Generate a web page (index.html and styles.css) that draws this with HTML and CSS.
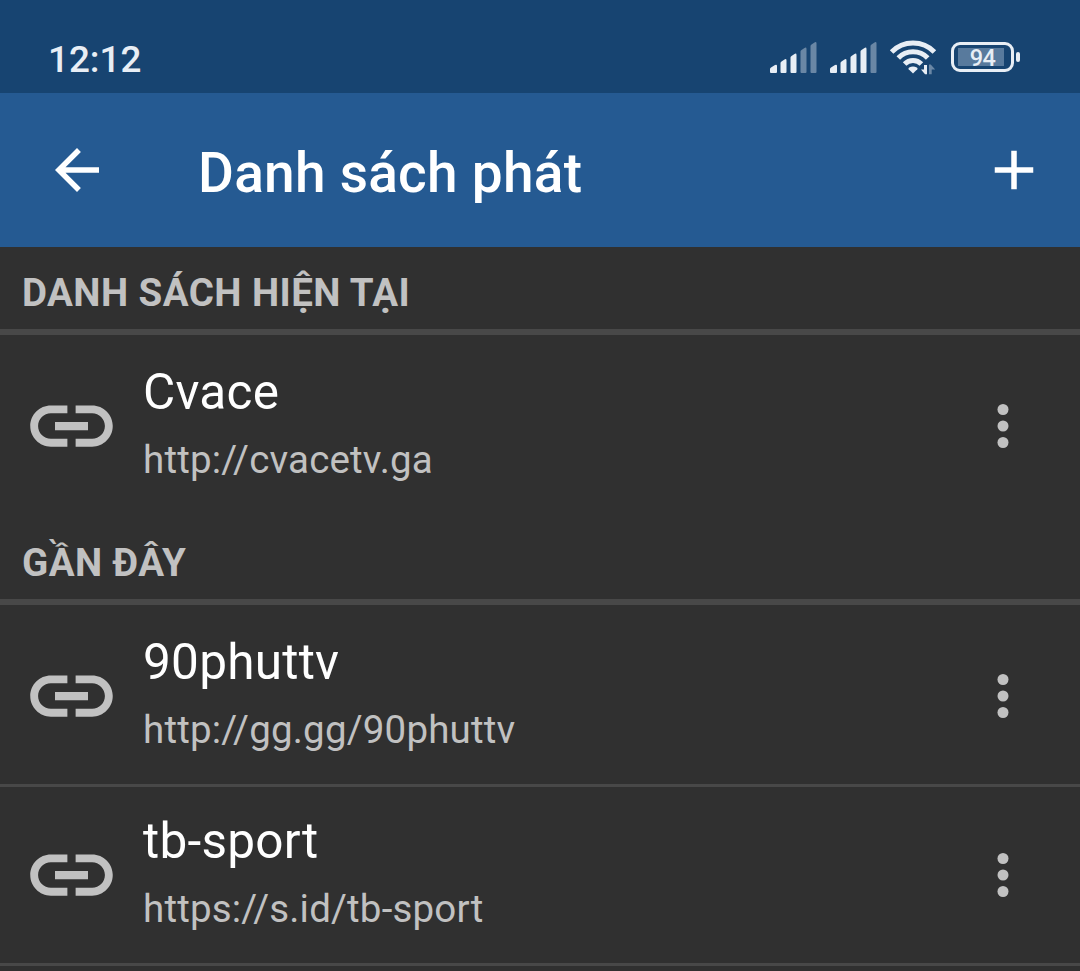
FILE: index.html
```html
<!DOCTYPE html>
<html lang="vi">
<head>
    <meta charset="UTF-8">
    <meta name="viewport" content="width=device-width,initial-scale=1">
    <title>Danh sách phát</title>
    <link rel="stylesheet" href="styles.css">
</head>
<body>
    <svg class="sprite">
        <symbol id="icon-link" viewBox="0 0 24 24">
            <path d="M3.9 12c0-1.71 1.39-3.1 3.1-3.1h4V7H7c-2.76 0-5 2.24-5 5s2.24 5 5 5h4v-1.9H7c-1.71 0-3.1-1.39-3.1-3.1zM8 13h8v-2H8v2zm9-6h-4v1.9h4c1.71 0 3.1 1.39 3.1 3.1s-1.39 3.1-3.1 3.1h-4V17h4c2.76 0 5-2.24 5-5s-2.24-5-5-5z"/>
        </symbol>
        <symbol id="icon-more" viewBox="0 0 24 24">
            <circle cx="12" cy="6" r="2"/>
            <circle cx="12" cy="12" r="2"/>
            <circle cx="12" cy="18" r="2"/>
        </symbol>
        <symbol id="icon-bar" viewBox="0 0 48 32">
            <path d="M0 27q0-1 1-1.600l4-2.400q2-1 2 1v6q0 1-1 1H1q-1 0-1-1z"/>
            <path d="M10.500 21q0-1 1-1.600l3-2q2-1 2 1V30q0 1-1 1h-4q-1 0-1-1z"/>
            <path d="M20.500 15.500q0-1 1-1.600l3-2q2-1 2 1V30q0 1-1 1h-4q-1 0-1-1z"/>
        </symbol>
    </svg>

    <div class="status-bar">
        <div class="clock">12:12</div>
        <div class="status-icons">
            <svg class="signal" viewBox="0 0 48 32">
                <use href="#icon-bar"/>
                <path class="dim" d="M30.500 9.500q0-1 1-1.600l3-2q2-1 2 1V30q0 1-1 1h-4q-1 0-1-1z"/>
                <path class="dim" d="M40.500 4q0-1 1-1.600l3-2q2-1 2 1V30q0 1-1 1h-4q-1 0-1-1z"/>
            </svg>
            <svg class="signal" viewBox="0 0 48 32">
                <use href="#icon-bar"/>
                <path d="M30.500 9.500q0-1 1-1.600l3-2q2-1 2 1V30q0 1-1 1h-4q-1 0-1-1z"/>
                <path class="dim" d="M40.500 4q0-1 1-1.600l3-2q2-1 2 1V30q0 1-1 1h-4q-1 0-1-1z"/>
            </svg>
            <svg class="wifi" viewBox="0 0 48 36">
                <g class="waves">
                    <path d="M1.600 12.900a30 30 0 0 1 42.800 0"/>
                    <path d="M8.300 19a20.500 20.500 0 0 1 29.400 0"/>
                    <path d="M14.600 25a11.800 11.800 0 0 1 16.800 0"/>
                </g>
                <path d="M23 34.500l-4.300-4.200q-.8-1 .5-1.800a7.500 7.500 0 0 1 7.600 0q1.300.8.5 1.800z"/>
                <path d="M34 26h3v9.300h-2L31 30.500h3z"/>
                <path class="dim" d="M39 25.600h1.700l4.500 5h-3.500v4.700H39z"/>
            </svg>
            <div class="battery">
                <div class="battery-level">94</div>
            </div>
        </div>
    </div>

    <div class="toolbar">
        <svg class="icon" viewBox="0 0 24 24"><path d="M20 11H7.830l5.590-5.590L12 4l-8 8 8 8 1.410-1.410L7.830 13H20v-2z"/></svg>
        <h1>Danh sách phát</h1>
        <svg class="icon" viewBox="0 0 24 24"><path d="M19 13h-6v6h-2v-6H5v-2h6V5h2v6h6v2z"/></svg>
    </div>

    <h2 class="section-title">DANH SÁCH HIỆN TẠI</h2>
    <div class="list">
        <div class="item">
            <svg class="link-icon"><use href="#icon-link"/></svg>
            <div class="item-text">
                <div class="name">Cvace</div>
                <div class="url">http://cvacetv.ga</div>
            </div>
            <svg class="icon more"><use href="#icon-more"/></svg>
        </div>
    </div>

    <h2 class="section-title">GẦN ĐÂY</h2>
    <div class="list recent">
        <div class="item">
            <svg class="link-icon"><use href="#icon-link"/></svg>
            <div class="item-text">
                <div class="name">90phuttv</div>
                <div class="url">http://gg.gg/90phuttv</div>
            </div>
            <svg class="icon more"><use href="#icon-more"/></svg>
        </div>
        <div class="item">
            <svg class="link-icon"><use href="#icon-link"/></svg>
            <div class="item-text">
                <div class="name">tb-sport</div>
                <div class="url">https://s.id/tb-sport</div>
            </div>
            <svg class="icon more"><use href="#icon-more"/></svg>
        </div>
    </div>
</body>
</html>
```
FILE: styles.css
```css
* {
    margin: 0;
    padding: 0;
    box-sizing: border-box;
}

body {
    font-family: Roboto, sans-serif;
    background-color: #303030;
    color: #fff;
}

svg {
    display: block;
    flex-shrink: 0;
    fill: currentColor;
}

.sprite {
    display: none;
}

.status-bar {
    display: flex;
    justify-content: space-between;
    height: 93px;
    padding: 0 60px 0 48px;
    background-color: #174471;
    color: #e8eef5;
}

.clock {
    padding-top: 38px;
    font-size: 36.8px;
    font-weight: 500;
    line-height: 44px;
}

.status-icons {
    display: flex;
    align-items: flex-start;
    padding-top: 39px;
}

.signal {
    width: 48px;
    height: 32px;
    margin: 3px 12px 0 0;
    overflow: visible;
}

.dim {
    opacity: 0.4;
}

.wifi {
    width: 48px;
    height: 36px;
    margin-right: 13px;
    overflow: visible;
}

.waves {
    fill: none;
    stroke: currentColor;
    stroke-width: 5;
}

.battery {
    display: flex;
    align-items: center;
    width: 69px;
    margin-top: 3px;
}

.battery::after {
    content: "";
    width: 4px;
    height: 10px;
    margin-left: 2px;
    border-radius: 2px;
    background-color: #e8eef5;
}

.battery-level {
    width: 63px;
    height: 30px;
    padding: 3px 5px;
    border: 3px solid #e8eef5;
    border-radius: 9px;
    background: linear-gradient(#587a9d, #587a9d) 4px 3px / 46px 18px no-repeat;
    font-size: 23.5px;
    font-weight: 500;
    letter-spacing: -0.6px;
    line-height: 20px;
    text-align: center;
}

.toolbar {
    display: flex;
    align-items: center;
    height: 154px;
    padding: 0 33px 0 44px;
    background-color: #255a92;
}

.toolbar h1 {
    flex: 1;
    margin: 5px 0 0 88px;
    font-size: 55px;
    font-weight: 500;
    letter-spacing: 0.25px;
    line-height: 64px;
}

.icon {
    width: 66px;
    height: 66px;
}

.section-title {
    height: 88px;
    padding: 23px 22px 0;
    border-bottom: 6px solid #484848;
    color: #c1c1c1;
    font-size: 38.5px;
    font-weight: 700;
    letter-spacing: 0.43px;
    line-height: 45px;
}

.list {
    padding: 3px 0;
}

.recent {
    padding-bottom: 0;
    border-bottom: 3px solid #484848;
}

.item {
    display: flex;
    align-items: center;
    height: 176px;
    padding: 0 44px 0 22px;
}

.item + .item {
    height: 179px;
    border-top: 3px solid #484848;
}

.link-icon {
    width: 99px;
    height: 100px;
    color: #c1c1c1;
}

.item-text {
    flex: 1;
    margin-left: 22px;
    padding-bottom: 7px;
}

.name {
    font-size: 49.5px;
    letter-spacing: 0.25px;
    line-height: 58px;
}

.url {
    margin-top: 16px;
    color: #c1c1c1;
    font-size: 38.5px;
    letter-spacing: 0.18px;
    line-height: 45px;
}

.more {
    color: #c1c1c1;
}
```
